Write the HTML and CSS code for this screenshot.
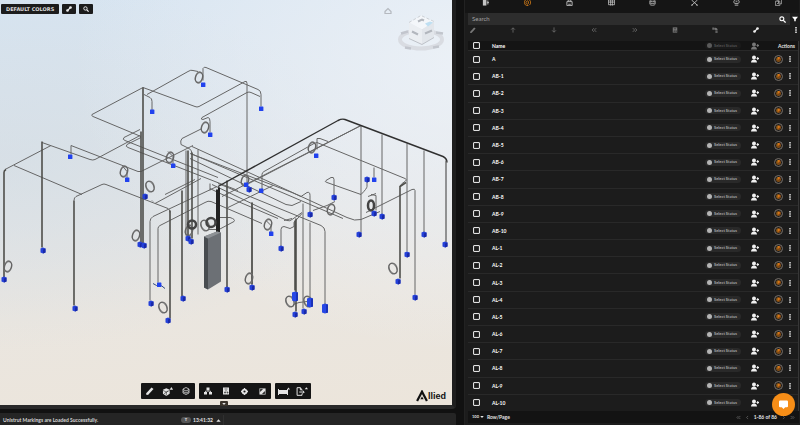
FILE: index.html
```
<!DOCTYPE html>
<html lang="en">
<head>
<meta charset="utf-8">
<title>Allied model viewer</title>
<link rel="stylesheet" href="styles.css">
</head>
<body>
<svg class="defs" aria-hidden="true">
  <symbol id="i-wand" viewBox="0 0 16 16"><path d="M0 13 11 1l4 3L4 16l-4-1z" fill="currentColor"/></symbol>
  <symbol id="i-link" viewBox="0 0 16 16"><path d="M4 12 12 4" stroke="currentColor" stroke-width="3"/><circle cx="4" cy="12" r="3.500" fill="currentColor"/><circle cx="12" cy="4" r="3.500" fill="currentColor"/></symbol>
  <symbol id="i-search" viewBox="0 0 16 16"><circle cx="6.500" cy="6.500" r="4.500" fill="none" stroke="currentColor" stroke-width="2.500"/><path d="m10 10 5 5" stroke="currentColor" stroke-width="3"/></symbol>
  <symbol id="i-cube" viewBox="0 0 20 16"><path d="m7 2 6 3v7l-6 4-6-4V5z" fill="currentColor"/><path d="m1 6 6 3 6-3M7 9v6M3 12l7-5" stroke="#222" fill="none"/><path d="m16 0 3 5h-6z" fill="currentColor"/></symbol>
  <symbol id="i-layers" viewBox="0 0 16 16"><path d="m8 1 6 3v8l-6 3-6-3V4z" fill="none" stroke="currentColor" stroke-width="1.500"/><path d="m2 5 6 3 6-3M2 9l6 3 6-3" fill="none" stroke="currentColor" stroke-width="1.500"/></symbol>
  <symbol id="i-tree" viewBox="0 0 16 16"><path d="M8 4v5M3 12V8h10v4" fill="none" stroke="currentColor" stroke-width="1.500"/><path d="M5 1h6v5H5zM0 10h6v5H0zM10 10h6v5h-6z" fill="currentColor"/></symbol>
  <symbol id="i-sheet" viewBox="0 0 16 16"><path d="M2 1h12v14H2z" fill="currentColor"/><path d="M5 4h6M8 6v3M5 10h2v2H5zM10 10h2v2h-2z" fill="none" stroke="#222" stroke-width="1.200"/></symbol>
  <symbol id="i-gear" viewBox="0 0 16 16"><circle cx="8" cy="8" r="4.500" fill="none" stroke="currentColor" stroke-width="4"/><path d="M8 0v3M8 13v3M0 8h3M13 8h3" stroke="currentColor" stroke-width="3"/></symbol>
  <symbol id="i-expand" viewBox="0 0 16 16"><path d="M1 1h14v14H1z" fill="currentColor"/><path d="M3 3h5L3 8zM8 13h5V8z" fill="#111" stroke="#111"/></symbol>
  <symbol id="i-bed" viewBox="0 0 24 16"><path d="M0 3h2v2h16V3h2v12h-2v-2H2v2H0z" fill="currentColor"/><path d="m21 0 3 4h-6z" fill="currentColor"/></symbol>
  <symbol id="i-export" viewBox="0 0 22 16"><path d="M11 5 8 1H2v14h9v-3M8 1v4h3M6 9h9M12 6l3 3-3 3" fill="none" stroke="currentColor" stroke-width="1.800"/><path d="m19 0 3 4h-6z" fill="currentColor"/></symbol>
  <symbol id="i-users" viewBox="0 0 16 16"><circle cx="6" cy="5" r="4" fill="currentColor"/><path d="M0 15c0-8 12-8 12 0zM11 6h5v2h-5zM12.500 4h2v6h-2z" fill="currentColor"/></symbol>
  <symbol id="i-lock" viewBox="0 0 16 16"><path d="M2 6h12v9H2z" fill="none" stroke="currentColor" stroke-width="2"/><path d="M5 6V2h6v4M5 12h6" fill="none" stroke="currentColor" stroke-width="2"/></symbol>
  <symbol id="i-doc" viewBox="0 0 16 16"><path d="M2 1h8v14H2z" fill="currentColor"/><path d="M11 5h4M11 8h5M11 11h4" stroke="currentColor" stroke-width="2"/></symbol>
  <symbol id="i-swirl" viewBox="0 0 16 16"><path d="M10 1C3 0 1 4 1 8s3 8 9 7M9 4C3 5 3 12 9 12M12 2l3 3v6l-3 3M10 5v6" fill="none" stroke="currentColor" stroke-width="2"/></symbol>
  <symbol id="i-grid" viewBox="0 0 16 16"><path d="M1 2h14v11H1zM1 7h14M6 2v13M10 2v13" fill="none" stroke="currentColor" stroke-width="1.800"/></symbol>
  <symbol id="i-db" viewBox="0 0 16 16"><path d="M2 4c0-3 12-3 12 0v8c0 3-12 3-12 0zM2 4c0 3 12 3 12 0M2 8c0 3 12 3 12 0" fill="none" stroke="currentColor" stroke-width="1.800"/></symbol>
  <symbol id="i-tools" viewBox="0 0 16 16"><path d="m1 2 13 12M15 2 2 14M0 14h4M12 14h4" stroke="currentColor" stroke-width="2"/></symbol>
  <symbol id="i-shield" viewBox="0 0 16 16"><path d="M4 10C0 8 2 1 8 1s8 7 4 9zM4 14h8M6 5h4" fill="none" stroke="currentColor" stroke-width="2"/></symbol>
  <symbol id="i-map" viewBox="0 0 16 16"><path d="M1 5h10v10H1zM5 5V1h10v10h-4M4 12l4-4M8 3v9" fill="none" stroke="currentColor" stroke-width="1.500"/></symbol>
  <symbol id="i-up" viewBox="0 0 16 16"><path d="M8 15V3M3 7l5-5 5 5" fill="none" stroke="currentColor" stroke-width="2"/></symbol>
  <symbol id="i-down" viewBox="0 0 16 16"><path d="M8 1v12M3 9l5 5 5-5" fill="none" stroke="currentColor" stroke-width="2"/></symbol>
  <symbol id="i-first" viewBox="0 0 16 16"><path d="M8 3 3 8l5 5M14 3 9 8l5 5" fill="none" stroke="currentColor" stroke-width="2"/></symbol>
  <symbol id="i-last" viewBox="0 0 16 16"><path d="m8 3 5 5-5 5M2 3l5 5-5 5" fill="none" stroke="currentColor" stroke-width="2"/></symbol>
  <symbol id="i-prev" viewBox="0 0 16 16"><path d="M10 3 5 8l5 5" fill="none" stroke="currentColor" stroke-width="2"/></symbol>
  <symbol id="i-next" viewBox="0 0 16 16"><path d="m6 3 5 5-5 5" fill="none" stroke="currentColor" stroke-width="2"/></symbol>
  <symbol id="i-elbow" viewBox="0 0 16 16"><path d="M1 1h4v6H1zM6 2h3c4 0 6 3 6 7h-6c0-2-1-2-3-2zM9 11h6v4H9z" fill="currentColor"/></symbol>
  <symbol id="i-dots" viewBox="0 0 16 16"><path d="M6 0h4v4H6zM6 6h4v4H6zM6 12h4v4H6z" fill="currentColor"/></symbol>
  <symbol id="i-filter" viewBox="0 0 16 16"><path d="M0 2h16l-6 7v5H6V9z" fill="currentColor"/></symbol>
  <symbol id="i-caret" viewBox="0 0 16 16"><path d="m8 4 7 8H1z" fill="currentColor"/></symbol>
  <symbol id="i-caretdown" viewBox="0 0 16 16"><path d="m8 12 7-8H1z" fill="currentColor"/></symbol>
</svg>

<main class="viewer">
  <section class="stage" aria-label="3D model">
    <svg class="model" viewBox="0 0 452 404" role="img" aria-label="Piping model">
      <defs>
        <g id="cube"><path d="M-2.500-2 0-3l2.500 1v4L0 3l-2.500-1z" fill="#2440d8"/><path d="M0-1v4l2.500-1v-4z" fill="#1929a8"/></g>
        <g id="tag"><rect x="-2" y="-2" width="4.400" height="4.400" rx=".5" fill="#2142ee"/></g>
        <g id="tank"><path d="M-3-4 0-5l3 1v8L0 5l-3-1z" fill="#2747e6"/><path d="M1-4v8.500l2-.5v-8z" fill="#1a32b8"/></g>
        <g id="coil" fill="none"><ellipse rx="3.500" ry="5.500" transform="rotate(15)" stroke="#777"  stroke-width="1.500"/><ellipse rx="3.500" ry="5" transform="rotate(25)" stroke="#555" stroke-width=".6"/></g>
        <g id="coilr" fill="none"><ellipse rx="4" ry="5.500" transform="rotate(-20)" stroke="#777" stroke-width="1.500"/><ellipse rx="3.500" ry="5.500" transform="rotate(-30)" stroke="#555" stroke-width=".6"/></g>
      </defs>
      <g class="pipe">
        <path d="M5 169 51 145M14 165l68 29M42 142l48 17q3 1 5 0l45-24M71 154v-9l67 26 3 0 52-26"/>
        <path d="M74 200q0-3 2-4l26-12q2-1 4 0l62 24q2 1 2 4"/>
        <path d="M143 87 92 114q-1 1 1 2l48 20M143 87l52 19q2 1 4 0l46-25q2-1 2 2v102"/>
        <path d="M147 94 188 71q3-2 5-1l5 1M203 80V68q1-2 3-1l52 22q3 1 3 5v12"/>
        <path d="m260 96-9-4q-2-1-4 0l-45 25q-2 2 1 2l5-2q2 0 2 4v11M144 94l6 3q2 1 2 4v9"/>
        <path d="m202 128-20 10q-2 2-1 6l8 4q3 1 3 6"/>
        <path d="m140 129-16 8q-2 2 1 3l93 37M141 137l-14 7q-2 2 1 3l110 43"/>
        <path d="m190 153 102 39 9 4 6-4q3-1 3 3v17M190 158l96 46 6 1 9-4M212 184l75 36q3 1 5-1l10-7"/>
        <path d="m192 146 155 71q8 4 14 2l19-8M193 154l150 64M218 183l103 42q4 2 4 6v74"/>
        <path d="m155 203 46-25M150 300v-79q0-3 3-5l64-30M158 282v-54q0-2 2-3l45-23q3-2 6-1l51 22M165 194l30-15"/>
        <path d="M262 190v-16q0-2 2-3l50-28 3-1 88 36q3 1 0 3-4 2-5 5M245 185l116-60M222 196l139-71M361 125v107M382 134v80M407 143v108M424 150v82"/>
        <path d="m317 149v-11l3 0 8 3M415 294V190q0-2-3-1l-46 23M374 177V167M367 180v6q0 2-6 8l-34-12q-3-1-1-2l5-3q3-1 3 2v18"/>
        <path d="m210 188 8 4 20 9 40 17M228 207l45-22M210 183v7M218 217l12 0q6 2 4 4l-15 8-11 0"/>
        <path d="M281 246v-17q0-3 3-3l6 2 4-2v-4l8-9M284 220l8-2M303 203v105M310 222v78M335 201l-8 4-14 5M271 232v-7l-5-5M252 284V202M293 304l6-2 8-1M371 194l5 1v15M368 196l8-3"/>
        <path d="M198 149v85M186 150v85M127 178v-7l-4-5M173 164v-8l-5-5M153 201l-1-1"/>
      </g>
      <g class="pipe riser">
        <path d="M4 277V172q0-2 2-3M42 247V141M74 305V200M170 318V210M182 296V190M143 243V87M141 242V131M192 238V152M188 238V150M227 287V180M252 284V202M296 311V218M400 278V186l6-4M295 290V220"/>
      </g>
      <path class="pipe main" d="M218 186l120-66q4-2 7-1l98 37q4 2 4 6"/>
      <path class="pipe thin" d="M446 160v82"/>
      <path d="M217 235v-46M219 233v-46" stroke="#222" stroke-width="2"/>
      <path d="m204 236 13-5 4 1v49l-13 8-4-2z" fill="#6c7075"/><path d="m204 236 4 2v51l-4-2z" fill="#484c50"/><path d="m204 236 13-5 4 1-13 6z" fill="#8e9296"/>
      <use href="#coil" x="199" y="77"/><use href="#coil" x="205" y="127"/><use href="#coil" x="124" y="171"/><use href="#coil" x="170" y="157"/><use href="#coilr" x="150" y="186"/><use href="#coil" x="8" y="266"/><use href="#coil" x="136" y="235"/><use href="#coilr" x="163" y="307"/><use href="#coil" x="312" y="147"/><use href="#coil" x="268" y="224"/><use href="#coil" x="249" y="278"/><use href="#coilr" x="290" y="301"/><use href="#coilr" x="308" y="301"/><use href="#coilr" x="393" y="268"/><use href="#coil" x="331" y="209"/><use href="#coil" x="245" y="180"/><use href="#coilr" x="205" y="225"/><use href="#coil" x="189" y="230"/>
      <g fill="none" stroke="#444" stroke-width="2.500"><ellipse cx="371" cy="205" rx="3" ry="5"/><circle cx="192" cy="224" r="4"/><circle cx="211" cy="222" r="4.500"/></g>
      <use href="#tag" x="203" y="84"/><use href="#tag" x="152" y="111"/><use href="#tag" x="210" y="134"/><use href="#tag" x="70" y="156"/><use href="#tag" x="127" y="179"/><use href="#tag" x="173" y="165"/><use href="#cube" x="145" y="196"/><use href="#tag" x="261" y="108"/><use href="#tag" x="316" y="155"/><use href="#tag" x="246" y="184"/><use href="#cube" x="249" y="189"/><use href="#tag" x="261" y="190"/><use href="#cube" x="334" y="197"/><use href="#cube" x="367" y="179"/><use href="#tag" x="374" y="179"/><use href="#cube" x="310" y="214"/><use href="#cube" x="374" y="213"/><use href="#cube" x="382" y="216"/>
      <use href="#cube" x="4" y="279"/><use href="#cube" x="43" y="250"/><use href="#cube" x="75" y="308"/><use href="#cube" x="140" y="244"/><use href="#cube" x="144" y="245"/><use href="#cube" x="151" y="303"/><use href="#cube" x="183" y="298"/><use href="#cube" x="168" y="320"/><use href="#cube" x="188" y="238"/><use href="#cube" x="191" y="241"/><use href="#cube" x="227" y="289"/><use href="#tag" x="271" y="233"/><use href="#cube" x="281" y="248"/><use href="#cube" x="252" y="287"/><use href="#cube" x="295" y="314"/><use href="#cube" x="304" y="311"/><use href="#cube" x="359" y="234"/><use href="#cube" x="407" y="254"/><use href="#cube" x="424" y="234"/><use href="#cube" x="445" y="244"/><use href="#cube" x="398" y="281"/><use href="#cube" x="415" y="297"/>
      <use href="#tank" x="295" y="296"/><use href="#tank" x="310" y="302"/><use href="#tank" x="325" y="308"/>
      <path d="M153 283q4 3 6 2t6 3" fill="none" stroke="#334a80"/><use href="#tag" x="159" y="284"/>
      <g opacity=".8">
        <ellipse cx="421" cy="39" rx="21" ry="9" fill="none" stroke="#d6d8de" stroke-width="4"/>
        <path d="m401 33 7-2M436 32l7 1M405 47l6 1M433 47l6-1" stroke="#b9bcc4" stroke-width="2.500"/>
        <path d="m409 22 12-7 13 6-12 8z" fill="#f7f9fc"/><path d="m409 22 13 7v15l-13-6z" fill="#eceef2"/><path d="m422 29 12-8v16l-12 7z" fill="#e1e4e9"/>
        <path d="m409 38 13 6 12-7" fill="none" stroke="#b4b7bd"/><path d="m409 22 12-7 13 6" fill="none" stroke="#c6c9ce" stroke-dasharray="3 2"/><path d="m425 23 5-2 3 1-5 4z" fill="#b5dcf2"/>
        <path d="m418 21 4-2 2 1M412 31l6 3M425 33l7-3" stroke="#a5a9b0" stroke-width="2" fill="none"/>
        <path d="m385 11 3-3 3 3v2h-6z" fill="none" stroke="#a9adb2" stroke-width="1.200"/>
      </g>
    </svg>
    <div class="topbar">
      <button class="chip wide">DEFAULT COLORS</button>
      <button class="chip" aria-label="Link"><svg><use href="#i-link"/></svg></button>
      <button class="chip" aria-label="Search model"><svg><use href="#i-search"/></svg></button>
    </div>
    <div class="dock">
      <div class="group"><button aria-label="Measure"><svg><use href="#i-wand"/></svg></button><button aria-label="Section"><svg class="wide"><use href="#i-cube"/></svg></button><button aria-label="Layers"><svg><use href="#i-layers"/></svg></button></div>
      <div class="group"><button aria-label="Model tree"><svg><use href="#i-tree"/></svg></button><button aria-label="Properties"><svg><use href="#i-sheet"/></svg></button><button aria-label="Settings"><svg class="small"><use href="#i-gear"/></svg></button><button aria-label="Full screen"><svg class="small"><use href="#i-expand"/></svg></button></div>
      <div class="group"><button aria-label="Spool"><svg class="wide"><use href="#i-bed"/></svg></button><button aria-label="Export"><svg class="wide"><use href="#i-export"/></svg></button></div>
    </div>
    <button class="handle" aria-label="Hide toolbar"><svg><use href="#i-caretdown"/></svg></button>
    <div class="logo"><svg viewBox="0 0 22 22" aria-hidden="true"><path d="M2 20 11 3l9 17" fill="none" stroke="#111" stroke-width="4"/><path d="m8 17 3-5 3 5z" fill="#111"/></svg><span>llied</span></div>
  </section>
  <footer class="status">
    <span class="message">Unistrut Markings are Loaded Successfully.</span>
    <span class="clock"><b>T</b><time>13:41:32</time><svg><use href="#i-caret"/></svg></span>
  </footer>
</main>

<aside class="panel">
  <nav class="tabs">
    <button aria-label="Documents"><svg><use href="#i-doc"/></svg></button>
    <button class="active" aria-label="Spools"><svg><use href="#i-swirl"/></svg></button>
    <button aria-label="Packages"><svg><use href="#i-lock"/></svg></button>
    <button aria-label="Materials"><svg><use href="#i-grid"/></svg></button>
    <button aria-label="Data"><svg><use href="#i-db"/></svg></button>
    <button aria-label="Tools"><svg><use href="#i-tools"/></svg></button>
    <button aria-label="Checks"><svg><use href="#i-shield"/></svg></button>
    <button aria-label="Drawings"><svg><use href="#i-map"/></svg></button>
  </nav>
  <form class="search">
    <input type="text" placeholder="Search" aria-label="Search">
    <button type="button" aria-label="Search"><svg><use href="#i-search"/></svg></button>
    <button type="button" aria-label="Filter"><svg><use href="#i-filter"/></svg></button>
  </form>
  <div class="tools">
    <button aria-label="Edit"><svg><use href="#i-wand"/></svg></button>
    <button aria-label="Move up"><svg><use href="#i-up"/></svg></button>
    <button aria-label="Move down"><svg><use href="#i-down"/></svg></button>
    <button aria-label="Collapse"><svg><use href="#i-first"/></svg></button>
    <button aria-label="Expand"><svg><use href="#i-last"/></svg></button>
    <button aria-label="Sheet"><svg><use href="#i-sheet"/></svg></button>
    <button aria-label="Fitting"><svg><use href="#i-elbow"/></svg></button>
    <button class="on" aria-label="Link"><svg><use href="#i-link"/></svg></button>
    <button class="on" aria-label="More"><svg><use href="#i-dots"/></svg></button>
  </div>
  <div class="list">
    <table>
      <thead>
        <tr>
          <th class="check"><input type="checkbox" aria-label="Select all"></th>
          <th class="name">Name</th>
          <th class="state"><button class="pill" disabled><i></i>Select Status</button></th>
          <th class="assign"><svg><use href="#i-users"/></svg></th>
          <th class="act">Actions</th>
        </tr>
      </thead>
      <tbody id="rows"></tbody>
    </table>
  </div>
  <footer class="pager">
    <button class="size">100 <svg><use href="#i-caretdown"/></svg></button><span>Row/Page</span>
    <div class="pages">
      <button aria-label="First page"><svg><use href="#i-first"/></svg></button>
      <button aria-label="Previous page"><svg><use href="#i-prev"/></svg></button>
      <span>1-86 of 86</span>
      <button aria-label="Next page"><svg><use href="#i-next"/></svg></button>
      <button aria-label="Last page"><svg><use href="#i-last"/></svg></button>
    </div>
  </footer>
</aside>
<button class="chat" aria-label="Chat"><svg viewBox="0 0 16 16"><path d="M2 1h12q2 0 2 2v8q0 2-2 2h-3l-3 3-3-3H2q-2 0-2-2V3q0-2 2-2z" fill="#fff"/></svg></button>
<script src="app.js"></script>
</body>
</html>
```
FILE: styles.css
```
* { box-sizing: border-box; }
html, body { height: 100%; }
body {
  margin: 0;
  display: flex;
  background: #111;
  color: #e4e4e4;
  font: 5px/8px Lato, "Open Sans", sans-serif;
  overflow: hidden;
}
button, input { font: inherit; color: inherit; margin: 0; padding: 0; border: 0; background: none; }
button { display: flex; align-items: center; justify-content: center; }
svg { display: block; width: 6px; height: 6px; flex: none; }
.defs { position: absolute; width: 0; height: 0; }

.viewer { width: 57%; display: flex; flex-direction: column; gap: 4px; }
.stage {
  position: relative;
  flex: 1;
  min-height: 0;
  border-right: 4px solid #1e1e1e;
  border-bottom: 4px solid #292929;
  border-radius: 0 0 4px 0;
  background:
    radial-gradient(ellipse at 105% 15%, rgba(240, 244, 249, .8), rgba(240, 244, 249, 0) 60%),
    radial-gradient(ellipse at 0 40%, rgba(210, 220, 227, .6), rgba(210, 220, 227, 0) 55%),
    linear-gradient(175deg, #d6e4f1 0, #dbe4ed 25%, #e3e5e7 50%, #eae6e0 72%, #ece5db 100%);
  background-clip: padding-box;
}
.model { width: 100%; height: 100%; }
.pipe { fill: none; stroke: #666; stroke-width: 1; stroke-linejoin: round; }
.riser { stroke: #4f4f4b; stroke-width: 1.6; }
.main { stroke: #303030; stroke-width: 1.4; }
.thin { stroke: #555; stroke-width: 1.2; }

.topbar { position: absolute; top: 4px; left: 1px; display: flex; gap: 3px; }
.chip { width: 14px; height: 10px; border-radius: 1px; background: #1c1c1c; color: #eee; }
.chip.wide { width: auto; padding: 0 5px; font: bold 5px/8px "DejaVu Sans", sans-serif; color: #ddd; }
.dock { position: absolute; left: 0; right: 0; bottom: 6px; display: flex; justify-content: center; gap: 4px; }
.group { display: flex; height: 16px; border-radius: 1px; background: #151515; }
.group button { width: 18px; }
.group svg { width: 8px; height: 8px; }
.group .wide { width: 12px; height: 9px; }
.group .small { width: 7px; height: 7px; }
.handle { position: absolute; left: 50%; bottom: -1px; width: 8px; height: 5px; margin-left: -6px; border-radius: 1px; background: #3a332b; }
.handle svg { width: 4px; height: 4px; }
.logo { position: absolute; right: 6px; bottom: 3px; display: flex; align-items: center; color: #111; font: bold 9px/12px "Liberation Sans", sans-serif; }
.logo svg { width: 12px; height: 12px; }

.status { height: 12px; display: grid; grid-template-columns: 1fr 120px 220px; align-items: center; padding: 2px 12px 0 3px; background: #252525; border-radius: 0 2px 0 0; }
.status .message { white-space: nowrap; font-weight: bold; color: #d6d6d6; }
.clock { display: flex; align-items: center; justify-content: flex-end; gap: 2px; height: 10px; padding-right: 2px; border-right: 1px solid #303030; font-weight: bold; }
.clock b { width: 10px; height: 6px; border-radius: 3px; background: #555; font-size: 4px; line-height: 6px; text-align: center; }
.clock svg { width: 5px; height: 5px; margin-left: 1px; }

.panel { flex: 1; min-width: 0; margin-left: 8px; padding: 0 1px 2px 3px; border-left: 1px solid #222; background: #1c1c1c; display: flex; flex-direction: column; }
.tabs { height: 13px; display: flex; justify-content: space-around; margin-left: -3px; background: #151515; color: #c4c4c4; }
.tabs button { height: 5px; width: 42px; }
.tabs svg { width: 7px; height: 7px; }
.tabs .active { color: #d07a18; }
.search { display: flex; height: 12px; }
.search input { flex: 1; min-width: 0; padding: 0 4px; background: #2d2d2d; font-size: 6px; outline: 0; }
.search input::placeholder { color: #a2a2a2; opacity: 1; }
.search button { width: 16px; background: #2d2d2d; color: #fff; }
.search button svg { width: 7px; height: 7px; }
.search button:last-child { width: 9px; background: none; }
.search button:last-child svg { width: 6px; height: 6px; }
.tools { display: flex; justify-content: space-between; height: 16px; padding: 2px 0 0 2px; color: #777; }
.tools button { width: 6px; height: 6px; }
.tools .on { color: #eee; }

.list { flex: 1; min-height: 0; border-right: 1px solid #363636; }
table { width: 100%; height: 100%; border-collapse: separate; border-spacing: 0; table-layout: fixed; }
th, td { padding: 0; text-align: left; font-weight: bold; vertical-align: middle; line-height: 6px; }
thead tr { height: 9px; background: #141414; }
thead th { height: 9px; }
td { border-top: 1px solid #292929; }
.check { width: 17px; }
.check input { appearance: none; display: block; width: 7px; height: 7px; margin: 0 auto; border: 1px solid #e0e0e0; border-radius: 1px; box-shadow: inset 0 0 1px #e0e0e0; }
.name { padding-left: 7px; color: #fff; }
.state { width: 40px; }
.assign { width: 24px; }
.assign svg { width: 8px; height: 8px; margin: 0 auto; color: #f0f0f0; }
th.assign svg { color: #777; }
.act { width: 31px; }
th.act { padding-left: 11px; }
.pill { width: 36px; height: 7px; margin-left: 2px; padding-left: 2px; gap: 2px; justify-content: flex-start; border-radius: 4px; background: #292929; color: #a8a8a8; font-size: 4px; line-height: 6px; white-space: nowrap; }
.pill i { width: 5px; height: 5px; border-radius: 50%; background: #b4b4b4; flex: none; }
.pill:disabled { background: #1a1a1a; color: #555; }
.pill:disabled i { background: #5a5a5a; }
.actions { display: flex; align-items: center; gap: 4px; padding-left: 7px; }
.progress { width: 9px; height: 9px; border: 1px solid #77706a; border-radius: 50%; background: radial-gradient(circle, #7d4a14 0 2px, transparent 3px); color: #f08c1c; font-size: 4px; font-weight: bold; line-height: 4px; }
.more { width: 5px; height: 6px; }

.pager { height: 12px; display: flex; align-items: center; padding: 0 4px; background: #131313; font-weight: bold; white-space: nowrap; }
.size { gap: 1px; margin-right: 3px; font-size: 4px; }
.size svg { width: 4px; height: 4px; }
.pages { margin-left: auto; display: flex; align-items: center; gap: 4px; }
.pages button { color: #777; width: 5px; }
.pages svg { width: 5px; height: 5px; }
.chat { position: fixed; right: 5px; bottom: 9px; width: 23px; height: 23px; border-radius: 50%; background: #f68d17; }
.chat svg { width: 9px; height: 9px; }
```
FILE: app.js
```
const series = (prefix, count) => Array.from({ length: count }, (_, i) => `${prefix}-${i + 1}`);
const names = ["A", ...series("AB", 10), ...series("AL", 10)];

document.getElementById("rows").innerHTML = names.map((name) => `
  <tr>
    <td class="check"><input type="checkbox" aria-label="Select ${name}"></td>
    <td class="name">${name}</td>
    <td class="state"><button class="pill"><i></i>Select Status</button></td>
    <td class="assign"><svg><use href="#i-users"/></svg></td>
    <td class="act"><div class="actions">
      <button class="progress" aria-label="Progress of ${name}">P</button>
      <button class="more" aria-label="More for ${name}"><svg><use href="#i-dots"/></svg></button>
    </div></td>
  </tr>`).join("");
```
